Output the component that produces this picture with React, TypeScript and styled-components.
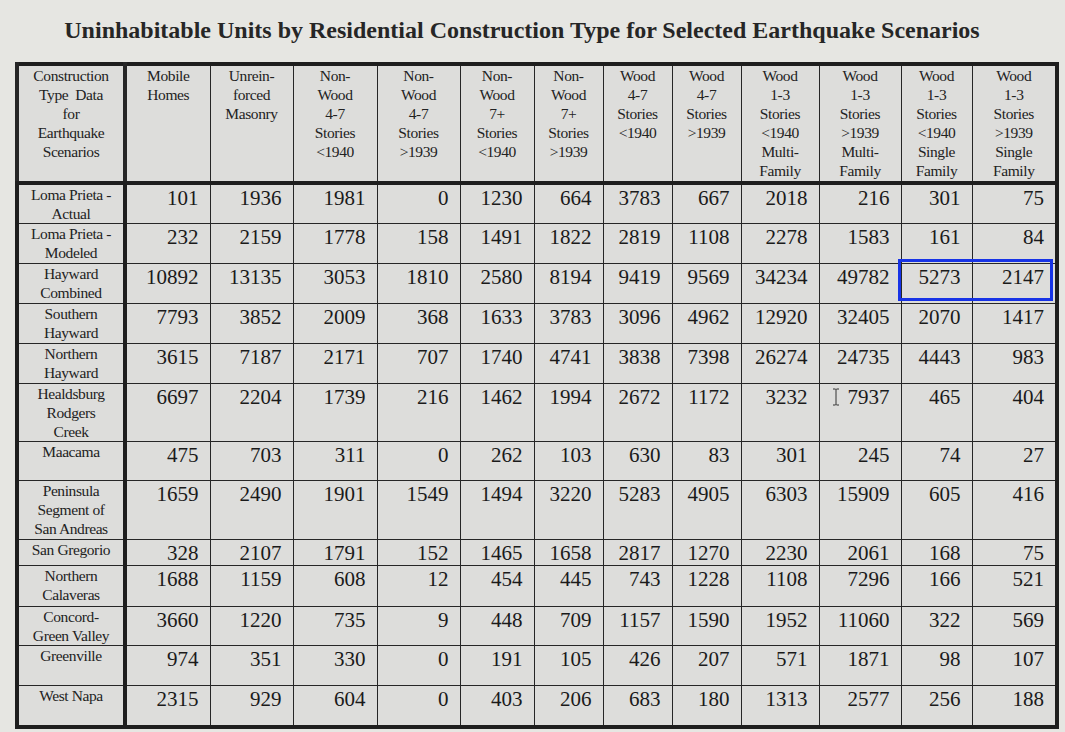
import React from "react";
import styled, { createGlobalStyle } from "styled-components";

const serif = `"Liberation Serif", "Times New Roman", "DejaVu Serif", serif`;

const GlobalStyle = createGlobalStyle`
  html, body {
    margin: 0;
    padding: 0;
    background: #e6e6e2;
  }
  body {
    font-family: ${serif};
    color: #1c1c1c;
  }
`;

const Page = styled.div`
  width: 1065px;
  height: 732px;
  overflow: hidden;
  display: flex;
  flex-direction: column;
  padding: 0 10px 0 15px;
  box-sizing: border-box;
`;

const Title = styled.h1`
  margin: 0;
  height: 60px;
  display: flex;
  align-items: center;
  justify-content: center;
  padding-right: 26px;
  font-family: ${serif};
  font-size: 24px;
  font-weight: bold;
  color: #262626;
`;

const Spacer = styled.div`
  height: 2px;
`;

const TableWrap = styled.div`
  position: relative;
  width: 1040px;
`;

const Table = styled.table`
  width: 1040px;
  table-layout: fixed;
  border-collapse: collapse;
  background: #dddddb;
  border: 4px solid #1e1e1e;
  font-family: ${serif};
`;

const HeadCell = styled.th<{ $first?: boolean }>`
  vertical-align: top;
  text-align: center;
  font-family: ${serif};
  font-weight: normal;
  font-size: 15.5px;
  line-height: 19px;
  padding: 0 1px;
  border-left: ${(p) => (p.$first ? "4px" : "1px")} solid #262626;
  border-right: ${(p) => (p.$first ? "4px" : "1px")} solid #262626;
  border-bottom: 4px solid #1e1e1e;
  letter-spacing: -0.4px;
  color: #222;
`;

const Row = styled.tr<{ $h: number }>`
  height: ${(p) => p.$h}px;
`;

const LabelCell = styled.td`
  vertical-align: top;
  text-align: center;
  font-family: ${serif};
  font-size: 15.5px;
  line-height: 19px;
  padding: 0 1px;
  border: 1px solid #262626;
  border-right: 4px solid #1e1e1e;
  letter-spacing: -0.4px;
  color: #222;
`;

const NumCell = styled.td`
  vertical-align: top;
  text-align: right;
  font-family: ${serif};
  font-size: 21px;
  line-height: 21px;
  padding: 3px 11px 0 2px;
  border: 1px solid #262626;
  color: #1a1a1a;
  white-space: nowrap;
`;

const Cursor = styled.svg`
  width: 8px;
  height: 18px;
  margin-right: 8px;
  vertical-align: -2px;
`;

const Highlight = styled.div`
  position: absolute;
  left: 883px;
  top: 197px;
  width: 155px;
  height: 42px;
  border: 3px solid #1733e6;
  box-sizing: border-box;
  pointer-events: none;
`;

const colWidths = [108, 85, 83, 84, 83, 74, 69, 69, 69, 78, 82, 71, 85];

const headers: string[][] = [
  ["Construction", "Type\u00a0 Data", "for", "Earthquake", "Scenarios"],
  ["Mobile", "Homes"],
  ["Unrein-", "forced", "Masonry"],
  ["Non-", "Wood", "4-7", "Stories", "<1940"],
  ["Non-", "Wood", "4-7", "Stories", ">1939"],
  ["Non-", "Wood", "7+", "Stories", "<1940"],
  ["Non-", "Wood", "7+", "Stories", ">1939"],
  ["Wood", "4-7", "Stories", "<1940"],
  ["Wood", "4-7", "Stories", ">1939"],
  ["Wood", "1-3", "Stories", "<1940", "Multi-", "Family"],
  ["Wood", "1-3", "Stories", ">1939", "Multi-", "Family"],
  ["Wood", "1-3", "Stories", "<1940", "Single", "Family"],
  ["Wood", "1-3", "Stories", ">1939", "Single", "Family"],
];

type Scenario = { label: string[]; h: number; values: number[] };

const rows: Scenario[] = [
  { label: ["Loma Prieta -", "Actual"], h: 39, values: [101, 1936, 1981, 0, 1230, 664, 3783, 667, 2018, 216, 301, 75] },
  { label: ["Loma Prieta -", "Modeled"], h: 40, values: [232, 2159, 1778, 158, 1491, 1822, 2819, 1108, 2278, 1583, 161, 84] },
  { label: ["Hayward", "Combined"], h: 40, values: [10892, 13135, 3053, 1810, 2580, 8194, 9419, 9569, 34234, 49782, 5273, 2147] },
  { label: ["Southern", "Hayward"], h: 40, values: [7793, 3852, 2009, 368, 1633, 3783, 3096, 4962, 12920, 32405, 2070, 1417] },
  { label: ["Northern", "Hayward"], h: 40, values: [3615, 7187, 2171, 707, 1740, 4741, 3838, 7398, 26274, 24735, 4443, 983] },
  { label: ["Healdsburg", "Rodgers", "Creek"], h: 58, values: [6697, 2204, 1739, 216, 1462, 1994, 2672, 1172, 3232, 7937, 465, 404] },
  { label: ["Maacama"], h: 39, values: [475, 703, 311, 0, 262, 103, 630, 83, 301, 245, 74, 27] },
  { label: ["Peninsula", "Segment of", "San Andreas"], h: 59, values: [1659, 2490, 1901, 1549, 1494, 3220, 5283, 4905, 6303, 15909, 605, 416] },
  { label: ["San Gregorio"], h: 26, values: [328, 2107, 1791, 152, 1465, 1658, 2817, 1270, 2230, 2061, 168, 75] },
  { label: ["Northern", "Calaveras"], h: 41, values: [1688, 1159, 608, 12, 454, 445, 743, 1228, 1108, 7296, 166, 521] },
  { label: ["Concord-", "Green Valley"], h: 39, values: [3660, 1220, 735, 9, 448, 709, 1157, 1590, 1952, 11060, 322, 569] },
  { label: ["Greenville"], h: 40, values: [974, 351, 330, 0, 191, 105, 426, 207, 571, 1871, 98, 107] },
  { label: ["West Napa"], h: 41, values: [2315, 929, 604, 0, 403, 206, 683, 180, 1313, 2577, 256, 188] },
];

const Lines = ({ lines }: { lines: string[] }) => (
  <>
    {lines.map((l, i) => (
      <React.Fragment key={i}>
        {i > 0 && <br />}
        {l}
      </React.Fragment>
    ))}
  </>
);

const IBeam = () => (
  <Cursor viewBox="0 0 8 18">
    <path d="M1 1h2.5l.5.6.5-.6H7M1 17h2.5l.5-.6.5.6H7M4 1.6v14.8" fill="none" stroke="#333" strokeWidth="1" />
  </Cursor>
);

const App = () => {
  return (
    <>
      <GlobalStyle />
      <Page>
        <Title>Uninhabitable Units by Residential Construction Type for Selected Earthquake Scenarios</Title>
        <Spacer />
        <TableWrap>
          <Table>
            <colgroup>
              {colWidths.map((w, i) => (
                <col key={i} style={{ width: w }} />
              ))}
            </colgroup>
            <thead>
              <Row $h={119}>
                {headers.map((h, i) => (
                  <HeadCell key={i} $first={i === 0}>
                    <Lines lines={h} />
                  </HeadCell>
                ))}
              </Row>
            </thead>
            <tbody>
              {rows.map((r) => (
                <Row key={r.label.join(" ")} $h={r.h}>
                  <LabelCell>
                    <Lines lines={r.label} />
                  </LabelCell>
                  {r.values.map((v, i) => (
                    <NumCell key={i}>
                      {v === 7937 && <IBeam />}
                      {v}
                    </NumCell>
                  ))}
                </Row>
              ))}
            </tbody>
          </Table>
          <Highlight />
        </TableWrap>
      </Page>
    </>
  );
};

export default App;
